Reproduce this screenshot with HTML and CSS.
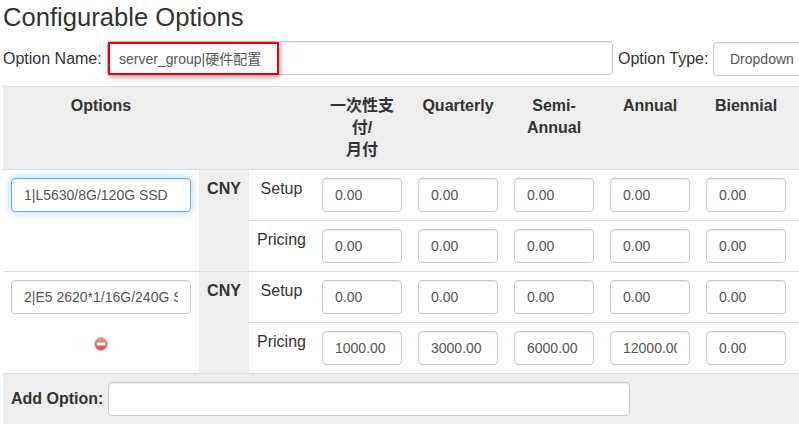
FILE: index.html
```html
<!DOCTYPE html>
<html lang="en">
<head>
<meta charset="utf-8">
<title>Configurable Options</title>
<link rel="stylesheet" href="styles.css">
</head>
<body>
<h1 class="title">Configurable Options</h1>
<div class="name-row">
  <label class="name-label">Option Name:</label>
  <div class="name-field">
    <input class="field name-input" type="text" value="server_group|硬件配置">
    <span class="highlight"></span>
  </div>
  <label class="type-label">Option Type:</label>
  <select class="field type-select"><option>Dropdown</option></select>
</div>
<table class="pricing">
  <colgroup>
    <col class="c-opt"><col class="c-cur"><col class="c-label">
    <col class="c-price"><col class="c-price"><col class="c-price"><col class="c-price"><col class="c-price"><col class="c-price">
  </colgroup>
  <thead>
    <tr>
      <th>Options</th>
      <th></th>
      <th></th>
      <th>一次性支付/<br>月付</th>
      <th>Quarterly</th>
      <th>Semi-Annual</th>
      <th>Annual</th>
      <th>Biennial</th>
      <th></th>
    </tr>
  </thead>
  <tbody>
    <tr>
      <td rowspan="2"><input class="field focused" type="text" value="1|L5630/8G/120G SSD"></td>
      <td rowspan="2" class="currency">CNY</td>
      <td class="row-label">Setup</td>
      <td><input class="field" type="text" value="0.00"></td>
      <td><input class="field" type="text" value="0.00"></td>
      <td><input class="field" type="text" value="0.00"></td>
      <td><input class="field" type="text" value="0.00"></td>
      <td><input class="field" type="text" value="0.00"></td>
      <td></td>
    </tr>
    <tr>
      <td class="row-label">Pricing</td>
      <td><input class="field" type="text" value="0.00"></td>
      <td><input class="field" type="text" value="0.00"></td>
      <td><input class="field" type="text" value="0.00"></td>
      <td><input class="field" type="text" value="0.00"></td>
      <td><input class="field" type="text" value="0.00"></td>
      <td></td>
    </tr>
    <tr>
      <td rowspan="2">
        <input class="field" type="text" value="2|E5 2620*1/16G/240G SSD">
        <div class="remove">
          <svg width="16" height="16" viewBox="0 0 16 16" aria-hidden="true">
            <defs>
              <linearGradient id="red" x1="0" y1="0" x2="0" y2="1">
                <stop offset="0" stop-color="#f29a90"/>
                <stop offset="1" stop-color="#e0483e"/>
              </linearGradient>
            </defs>
            <circle cx="8" cy="8" r="6.5" fill="url(#red)" stroke="#eeb4ae" stroke-width="1"/>
            <rect x="3.8" y="6.6" width="8.4" height="2.8" rx="0.6" fill="#fff"/>
          </svg>
        </div>
      </td>
      <td rowspan="2" class="currency">CNY</td>
      <td class="row-label">Setup</td>
      <td><input class="field" type="text" value="0.00"></td>
      <td><input class="field" type="text" value="0.00"></td>
      <td><input class="field" type="text" value="0.00"></td>
      <td><input class="field" type="text" value="0.00"></td>
      <td><input class="field" type="text" value="0.00"></td>
      <td></td>
    </tr>
    <tr>
      <td class="row-label">Pricing</td>
      <td><input class="field" type="text" value="1000.00"></td>
      <td><input class="field" type="text" value="3000.00"></td>
      <td><input class="field" type="text" value="6000.00"></td>
      <td><input class="field" type="text" value="12000.00"></td>
      <td><input class="field" type="text" value="0.00"></td>
      <td></td>
    </tr>
    <tr class="add-row">
      <td colspan="9">
        <div class="add-inner">
          <label class="add-label">Add Option:</label>
          <input class="field add-input" type="text">
        </div>
      </td>
    </tr>
  </tbody>
</table>
</body>
</html>
```
FILE: styles.css
```css
html, body {
  margin: 0;
  padding: 0;
  height: 424px;
  overflow: hidden;
  background: #fff;
}
body {
  font-family: "Liberation Sans", "Noto Sans CJK SC", sans-serif;
  font-size: 16px;
  line-height: 22px;
  color: #333;
  width: 799px;
}
.title {
  margin: 0;
  padding-left: 3px;
  height: 41px;
  font-size: 25.6px;
  font-weight: 400;
  line-height: 35px;
}
.field {
  box-sizing: border-box;
  display: block;
  width: 100%;
  height: 34px;
  padding: 6px 12px;
  font-family: "Liberation Sans", "Noto Sans CJK SC", sans-serif;
  font-size: 14px;
  line-height: 20px;
  color: #555;
  background: #fff;
  border: 1px solid #ccc;
  border-radius: 4px;
  box-shadow: inset 0 1px 1px rgba(0, 0, 0, .075);
  outline: none;
}
.name-input {
  padding-left: 11px;
}
.focused {
  border-color: #66afe9;
  box-shadow: inset 0 1px 1px rgba(0, 0, 0, .075), 0 0 8px rgba(102, 175, 233, .6);
}
.name-row {
  display: flex;
  align-items: flex-start;
  height: 45px;
  padding-left: 3px;
  white-space: nowrap;
}
.name-label {
  flex: none;
  width: 104px;
  line-height: 35px;
}
.name-field {
  position: relative;
  width: 506px;
  flex: none;
}
.highlight {
  position: absolute;
  left: 1px;
  top: 1px;
  width: 171px;
  height: 33px;
  box-sizing: border-box;
  border: 2px solid #e8000b;
  box-shadow: 1px 2px 5px rgba(0, 0, 0, .4);
  pointer-events: none;
}
.type-label {
  flex: none;
  margin-left: 5px;
  width: 95px;
  line-height: 35px;
}
.type-select {
  flex: none;
  width: 120px;
  margin-top: 1px;
  padding-left: 16px;
  appearance: none;
  -webkit-appearance: none;
}
.pricing {
  table-layout: fixed;
  border-collapse: separate;
  border-spacing: 0;
  width: 887px;
  margin-left: 3px;
}
.c-opt { width: 196px; }
.c-cur { width: 50px; }
.c-label { width: 65px; }
.c-price { width: 96px; }
.pricing th,
.pricing td {
  padding: 8px;
  vertical-align: top;
  border-top: 1px solid #ddd;
}
.pricing th {
  background: #eee;
  font-weight: 700;
  text-align: center;
}
.pricing td {
  text-align: center;
}
.pricing .currency {
  background: #eee;
  font-weight: 700;
  padding-left: 0;
  padding-right: 0;
}
.pricing .row-label {
  padding-left: 0;
  padding-right: 0;
}
.remove {
  display: flex;
  justify-content: center;
  margin-top: 22px;
  height: 16px;
}
.add-row td {
  background: #eee;
  text-align: left;
  height: 34px;
}
.add-inner {
  display: flex;
  align-items: center;
}
.add-label {
  font-weight: 700;
  width: 97px;
  flex: none;
}
.add-input {
  width: 522px;
  flex: none;
}
```
